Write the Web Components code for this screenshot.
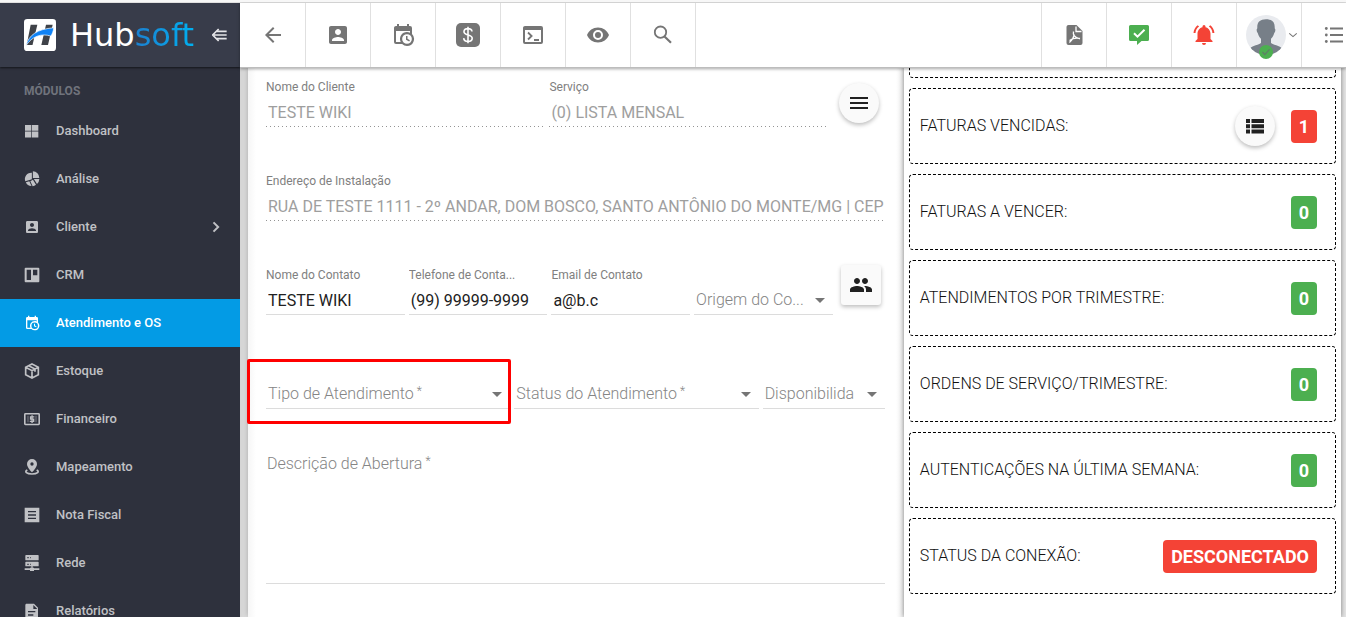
<!DOCTYPE html>
<html lang="pt-BR">
<head>
<meta charset="utf-8">
<title>Hubsoft</title>
<style>
html,body{margin:0;height:100%}
body{font-family:Roboto,"Liberation Sans",sans-serif;font-size:16px;line-height:20px;color:#212121;background:#e0e0e0;overflow:hidden}
</style>
</head>
<body>
<hs-shell>
  <hs-sidebar slot="side">
    <hs-nav-item icon="dashboard">Dashboard</hs-nav-item>
    <hs-nav-item icon="pie">Análise</hs-nav-item>
    <hs-nav-item icon="account" more>Cliente</hs-nav-item>
    <hs-nav-item icon="board">CRM</hs-nav-item>
    <hs-nav-item icon="calendar" active>Atendimento e OS</hs-nav-item>
    <hs-nav-item icon="cube">Estoque</hs-nav-item>
    <hs-nav-item icon="cash">Financeiro</hs-nav-item>
    <hs-nav-item icon="marker">Mapeamento</hs-nav-item>
    <hs-nav-item icon="note">Nota Fiscal</hs-nav-item>
    <hs-nav-item icon="server">Rede</hs-nav-item>
    <hs-nav-item icon="document">Relatórios</hs-nav-item>
  </hs-sidebar>
  <hs-toolbar slot="bar">
    <hs-tool icon="back" name="Voltar" first></hs-tool>
    <hs-tool icon="account" name="Clientes"></hs-tool>
    <hs-tool icon="calendar" name="Agenda"></hs-tool>
    <hs-tool icon="dollar" name="Financeiro"></hs-tool>
    <hs-tool icon="console" name="Console"></hs-tool>
    <hs-tool icon="eye" name="Visualizar"></hs-tool>
    <hs-tool icon="search" name="Buscar"></hs-tool>
    <hs-tool slot="end" icon="pdf" name="PDF"></hs-tool>
    <hs-tool slot="end" icon="chat" name="Mensagens" style="color:#4caf50"></hs-tool>
    <hs-tool slot="end" icon="bell" name="Notificações" style="color:#f44336"></hs-tool>
    <hs-user slot="end"></hs-user>
    <hs-tool slot="end" icon="list" name="Lista" last></hs-tool>
  </hs-toolbar>
  <hs-panel>
    <hs-row kind="client">
      <hs-field label="Nome do Cliente" value="TESTE WIKI" disabled></hs-field>
      <hs-field label="Serviço" value="(0) LISTA MENSAL" disabled></hs-field>
      <hs-fab icon="menu" name="Menu" style="margin:0 6px"></hs-fab>
    </hs-row>
    <hs-row>
      <hs-field label="Endereço de Instalação" value="RUA DE TESTE 1111 - 2º ANDAR, DOM BOSCO, SANTO ANTÔNIO DO MONTE/MG | CEP" disabled></hs-field>
    </hs-row>
    <hs-row kind="contact">
      <hs-field label="Nome do Contato" value="TESTE WIKI"></hs-field>
      <hs-field label="Telefone de Conta..." value="(99) 99999-9999"></hs-field>
      <hs-field label="Email de Contato" value="a@b.c"></hs-field>
      <hs-select label="Origem do Co..."></hs-select>
      <hs-fab icon="people" name="Contatos" square></hs-fab>
    </hs-row>
    <hs-row kind="ticket">
      <hs-select label="Tipo de Atendimento" required highlight></hs-select>
      <hs-select label="Status do Atendimento" required></hs-select>
      <hs-select label="Disponibilida"></hs-select>
    </hs-row>
    <hs-area label="Descrição de Abertura"></hs-area>
  </hs-panel>
  <hs-stats>
    <hs-stat></hs-stat>
    <hs-stat value="1" tone="red">FATURAS VENCIDAS:<hs-fab slot="action" icon="rows" name="Listar faturas"></hs-fab></hs-stat>
    <hs-stat value="0">FATURAS A VENCER:</hs-stat>
    <hs-stat value="0">ATENDIMENTOS POR TRIMESTRE:</hs-stat>
    <hs-stat value="0">ORDENS DE SERVIÇO/TRIMESTRE:</hs-stat>
    <hs-stat value="0">AUTENTICAÇÕES NA ÚLTIMA SEMANA:</hs-stat>
    <hs-stat value="DESCONECTADO" tone="red">STATUS DA CONEXÃO:</hs-stat>
  </hs-stats>
</hs-shell>
<script>
const ICONS = {
  back:'<path d="M20 11H7.83l5.59-5.59L12 4l-8 8 8 8 1.41-1.41L7.83 13H20z"/>',
  account:'<path d="M3 5v14c0 1.1.89 2 2 2h14c1.1 0 2-.9 2-2V5c0-1.1-.9-2-2-2H5c-1.11 0-2 .9-2 2zm12 4c0 1.66-1.34 3-3 3s-3-1.34-3-3 1.34-3 3-3 3 1.34 3 3zm-9 8c0-2 4-3.1 6-3.1s6 1.1 6 3.1v1H6z"/>',
  calendar:'<path d="M15 13h1.5v2.82l2.44 1.41-.75 1.3L15 16.69zM19 8H5v11h4.67A7 7 0 0 1 16 9c1.07 0 2.09.24 3 .67zM5 21a2 2 0 0 1-2-2V5c0-1.11.89-2 2-2h1V1h2v2h8V1h2v2h1a2 2 0 0 1 2 2v6.1A7 7 0 0 1 16 23a7 7 0 0 1-4.9-2zm11-9.85a4.85 4.85 0 1 0 0 9.7 4.85 4.85 0 0 0 0-9.7z"/>',
  dollar:'<rect width="24" height="24" rx="5"/><path d="M16 8.5C15.8 6.600 14.300 5.600 12 5.600S8 6.800 8 8.700c0 4.300 8.200 2.100 8.200 6.500 0 2-1.700 3.200-4.200 3.200s-4.200-1.200-4.300-3.300M12 3.800v16.400" fill="none" stroke="#fff" stroke-width="1.600"/>',
  console:'<path d="M4 3h16a2 2 0 0 1 2 2v14a2 2 0 0 1-2 2H4a2 2 0 0 1-2-2V5c0-1.100.9-2 2-2zm0 4v12h16V7z"/><path d="m7 9.500 3.600 3.500L7 16.500M13 17h5" fill="none" stroke="currentColor" stroke-width="1.800"/>',
  eye:'<path d="M12 4.500C7 4.500 2.730 7.610 1 12c1.730 4.390 6 7.500 11 7.500s9.270-3.110 11-7.500c-1.730-4.390-6-7.500-11-7.500zM12 17a5 5 0 1 1 0-10 5 5 0 0 1 0 10zm0-8a3 3 0 1 0 0 6 3 3 0 0 0 0-6z"/>',
  search:'<circle cx="9.500" cy="9.200" r="5.700" fill="none" stroke="currentColor" stroke-width="1.800"/><path d="m13.500 13.500 6.500 6.300" fill="none" stroke="currentColor" stroke-width="2.200"/>',
  pdf:'<path d="M6.500 2h8l6 6v12a2 2 0 0 1-2 2h-12a2 2 0 0 1-2-2V4c0-1.100.9-2 2-2z"/><path d="M14 3.500v5h5.500M11.500 8.500c-.6 2.500.2 6 6.500 7.300M12.200 11.500c-.5 3-2 5.700-4.800 8M7.500 17.500c3-2 6.500-2.800 10.500-2" fill="none" stroke="#fff" stroke-width="1.300"/>',
  chat:'<path d="M3.500 2h17A1.500 1.500 0 0 1 22 3.500v13a1.500 1.500 0 0 1-1.500 1.500h-6l-4.500 4v-4H3.500A1.500 1.500 0 0 1 2 16.500v-13A1.500 1.500 0 0 1 3.500 2z"/><path d="m7 10.200 3.500 3.500L17.500 6.700" fill="none" stroke="#fff" stroke-width="2"/>',
  bell:'<path d="M14 20h-4a2 2 0 0 0 4 0zM18.500 10.500c0-3.070-2.140-5.640-5-6.320V3.500a1.500 1.500 0 0 0-3 0v.68c-2.870.68-5 3.250-5 6.320V16l-2 2v1h17v-1l-2-2zM20.400 10h2c-.15-3.210-1.730-6.030-4.120-7.850l-1.430 1.430A8.500 8.500 0 0 1 20.400 10zM7.080 3.580 5.650 2.150C3.260 3.970 1.680 6.790 1.500 10h2a8.500 8.500 0 0 1 3.580-6.420z"/>',
  list:'<path d="M8 4.500h13v2H8zm0 6.500h13v2H8zm0 6.500h13v2H8z"/><circle cx="4.300" cy="5.500" r="1.400"/><circle cx="4.300" cy="12" r="1.400"/><circle cx="4.300" cy="18.500" r="1.400"/>',
  menu:'<path d="M3 6h18v2H3zm0 5h18v2H3zm0 5h18v2H3z"/>',
  people:'<path d="M16 11c1.660 0 2.990-1.340 2.990-3S17.660 5 16 5s-3 1.340-3 3 1.340 3 3 3zm-8 0c1.660 0 2.990-1.340 2.990-3S9.660 5 8 5 5 6.340 5 8s1.340 3 3 3zm0 2c-2.330 0-7 1.170-7 3.500V19h14v-2.500C15 14.170 10.330 13 8 13zm8 0c-.29 0-.62.02-.97.05 1.160.84 1.970 1.970 1.970 3.450V19h6v-2.500c0-2.330-4.670-3.500-7-3.500z"/>',
  rows:'<path d="M3 5h4v4H3zm5.500 0H21v4H8.500zM3 10.200h4v4H3zm5.500 0H21v4H8.500zM3 15.400h4v4H3zm5.500 0H21v4H8.500z"/>',
  dashboard:'<path d="M1.500 3h9.500v8.800H1.500zM12 3h9.500v8.800H12zM1.500 12.800h9.500v8.800H1.500zm10.500 0h9.500v8.800H12z"/>',
  pie:'<path d="M13.300 .5a10 10 0 0 1 9.700 10h-9.700zM11.800 2.500v9.800L2 15.500A9.500 9.500 0 0 1 11.800 2.500zM23 12a10.500 10.500 0 0 1-3.500 7.500L14.800 12zM13.400 13.200l4.600 7.500a11 11 0 0 1-5 2L9.500 15.500zM8 15.300l3.300 7.300A9 9 0 0 1 2.800 17z"/>',
  board:'<path fill-rule="evenodd" d="M2.500 1h19A1.500 1.500 0 0 1 23 2.500v19a1.500 1.500 0 0 1-1.500 1.500h-19A1.500 1.500 0 0 1 1 21.500v-19A1.500 1.500 0 0 1 2.500 1zM4 4v15.500h6.500V4zm9.500 0v8.500H20V4z"/>',
  cube:'<path d="M12 1.500 21.500 6.500v11L12 22.500 2.500 17.500v-11zM2.500 6.500 12 11.500l9.500-5M12 11.500v11M7 4l9.500 5v4" fill="none" stroke="currentColor" stroke-width="2.500"/>',
  cash:'<rect x="1.200" y="4.200" width="21.600" height="16" rx="1" fill="none" stroke="currentColor" stroke-width="2.400"/><path d="M15.500 8.800H9.800v3.300h4.700v3.500H8.700M12.100 6.500v11.500" fill="none" stroke="currentColor" stroke-width="2"/><path d="M5 7h2v10H5zm12 0h2v10h-2z" opacity=".4"/>',
  marker:'<path fill-rule="evenodd" d="M12 0a7.500 7.500 0 0 1 7.500 7.500C19.500 13 12 20 12 20S4.500 13 4.500 7.500A7.500 7.500 0 0 1 12 0zm0 5a2.500 2.500 0 1 0 0 5 2.500 2.500 0 0 0 0-5z"/><path d="M5 16.500c-5 2.500-1 6 7 6s12-3.500 7-6" fill="none" stroke="currentColor" stroke-width="2.600"/>',
  note:'<path fill-rule="evenodd" d="M1 1h22v22H1zm5 5v2h12V6zm0 5v2h12v-2zm0 5v2h12v-2z"/>',
  server:'<path fill-rule="evenodd" d="M3 0h18a1 1 0 0 1 1 1v6a1 1 0 0 1-1 1H3a1 1 0 0 1-1-1V1a1 1 0 0 1 1-1zm2 3v2h2V3zm4 0v2h1V3zM3 10h18a1 1 0 0 1 1 1v5a1 1 0 0 1-1 1h-8v2h2v1h8v2.500h-8V24H9v-1.500H1V20h8v-1h2v-2H3a1 1 0 0 1-1-1v-5a1 1 0 0 1 1-1zm2 3v2h2v-2zm4 0v2h1v-2z"/>',
  document:'<path fill-rule="evenodd" d="M4 1h11l6 6v14a2 2 0 0 1-2 2H4a2 2 0 0 1-2-2V3c0-1.100.9-2 2-2zm10 2v6h6zM6 12v2h11v-2zm0 5v2h8v-2z"/>',
  chevron:'<path d="m6 4 8 8-8 8" fill="none" stroke="currentColor" stroke-width="3.400"/>',
  down:'<path d="m3 8 9 8 9-8" fill="none" stroke="currentColor" stroke-width="2.500"/>',
  collapse:'<path d="M10 3 1 12l9 9M3 12h19M7 6.500h15M7 17.500h15" fill="none" stroke="currentColor" stroke-width="2.600"/>',
  logo:'<rect width="24" height="24" rx="2.500" fill="#fff"/><path d="M5 4.300h5L6.400 19.500H2zM16.500 4.300h5L18 19.500h-5z" fill="#3f4248"/><path d="M1.500 20C3.500 12 10 7.500 22.300 6.600c-.3 2.500-1 4.600-2.200 6.200C13 10.500 6 13 1.500 20z" fill="#0f82f5" stroke="#fff" stroke-width=".5"/>',
  avatar:'<clipPath id="r"><circle cx="12" cy="12" r="12"/></clipPath><g clip-path="url(#r)"><path fill="#e9ebef" d="M0 0h24v24H0z"/><path d="M12 2.500c3.800 0 5.500 1.900 5.200 5.500.7.400.5 1.900-.3 2.900-.4 1.500-1.100 2.600-1.900 3.300v2.600c2.500 1.600 6.500 1.700 7.500 4.700L22 24H2l-.5-2.500c1-3 5-3.100 7.500-4.700v-2.600c-.8-.7-1.500-1.800-1.900-3.300-.8-1-1-2.500-.3-2.900C6.500 4.400 8.200 2.500 12 2.500z" fill="#777f88"/></g>',
  tick:'<circle cx="12" cy="12" r="12" fill="#4caf50"/><path d="m6 12 4 4.500 8-9" fill="none" stroke="#607d68" stroke-width="2.200"/>'
};

function define(name, css, render, display = 'block') {
  customElements.define(name, class extends HTMLElement {
    connectedCallback() {
      if (this.shadowRoot) return;
      const root = this.attachShadow({ mode: 'open' });
      root.innerHTML = `<style>:host{display:${display};box-sizing:border-box}*{box-sizing:border-box}${css}</style>${render(this)}`;
    }
  });
}
const at = (el, n) => el.getAttribute(n) || '';

define('hs-icon', `
  :host{width:24px;height:24px;flex:none}
  :host([size="40"]){width:40px;height:40px}
  :host([size="32"]){width:32px;height:32px}
  :host([size="16"]){width:16px;height:16px}
  :host([size="14"]){width:14px;height:14px}
  :host([size="10"]){width:10px;height:10px}
  svg{display:block;width:100%;height:100%}`,
  el => `<svg viewBox="0 0 24 24" fill="currentColor" aria-hidden="true">${ICONS[at(el, 'name')]}</svg>`);

define('hs-shell', `
  :host{height:100vh;border-top:2px solid #f7f7f7;overflow:hidden}
  .app{display:grid;grid-template:64px 1fr/240px 1fr;height:100%;border-top:1px solid #e0e0e0}
  .side{grid-row:1/3;min-height:0;display:grid}
  .bar{z-index:3;display:grid}
  main{min-height:0;display:grid;grid-template-columns:3fr 2fr;padding:0 5px 0 8px;overflow:hidden;background:linear-gradient(90deg,#d4d4d4,#e4e4e4 8px)}`,
  () => `<div class="app"><div class="side"><slot name="side"></slot></div><div class="bar"><slot name="bar"></slot></div><main><slot></slot></main></div>`);

define('hs-sidebar', `
  :host{display:flex;flex-direction:column;min-height:0;overflow:hidden;background:#2e313d}
  header{flex:none;display:flex;align-items:center;height:64px;padding:0 12px 0 24px;background:#383c4a;color:#fff;box-shadow:0 1px 2px rgba(0,0,0,.6);position:relative}
  .word{flex:1;margin-left:14px;font:32px/32px "DejaVu Sans",sans-serif;color:#fff;text-decoration:none}
  .word span{background:linear-gradient(90deg,#1c80d0,#00b0f0);background-clip:text;-webkit-background-clip:text;color:transparent}
  button{border:0;background:none;padding:0;color:#e4e5e8;display:flex}
  h2{flex:none;margin:8px 0 0;padding-left:24px;font-size:12px;line-height:32px;font-weight:700;color:#70737c}
  nav{flex:none}`,
  () => `<header><hs-icon name="logo" size="32"></hs-icon><a class="word" href="#">Hub<span>soft</span></a><button aria-label="Recolher menu"><hs-icon name="collapse" size="16"></hs-icon></button></header><h2>MÓDULOS</h2><nav><slot></slot></nav>`);

define('hs-nav-item', `
  a{display:flex;align-items:center;gap:16px;height:48px;padding:0 16px 0 24px;font-size:13px;font-weight:500;color:#c0c1c5;text-decoration:none}
  :host([active]) a{background:#039be5;color:#fff}
  span{flex:1}`,
  el => `<a href="#"><hs-icon name="${at(el, 'icon')}" size="16"></hs-icon><span><slot></slot></span>${el.hasAttribute('more') ? '<hs-icon name="chevron" size="14"></hs-icon>' : ''}</a>`);

define('hs-toolbar', `
  :host{display:flex;background:#fff;color:#757575;border-bottom:1px solid #bdbdbd;box-shadow:0 1px 3px rgba(0,0,0,.35);height:65px;margin-bottom:-1px}
  div{display:flex}
  .end{margin-left:auto}`,
  () => `<div><slot></slot></div><div class="end"><slot name="end"></slot></div>`);

define('hs-tool', `
  :host{display:grid}
  button{width:65px;border:0;border-right:1px solid #e0e0e0;padding:0;background:none;color:inherit;display:flex;align-items:center;justify-content:center}
  :host([slot=end]) button{border-right:0;border-left:1px solid #e0e0e0}
  :host([first]) button{width:66px}
  :host([last]) button{width:45px;justify-content:flex-end}`,
  el => `<button aria-label="${at(el, 'name')}"><hs-icon name="${at(el, 'icon')}"></hs-icon></button>`);

define('hs-user', `
  :host{display:grid}
  button{width:65px;border:0;border-left:1px solid #e0e0e0;padding:0 0 0 9px;background:none;color:#757575;display:flex;align-items:center;gap:2px}
  .pic{position:relative}
  .state{position:absolute;left:13px;bottom:-4px}`,
  () => `<button aria-label="Usuário"><span class="pic"><hs-icon name="avatar" size="40"></hs-icon><hs-icon class="state" name="tick" size="14"></hs-icon></span><hs-icon name="down" size="10"></hs-icon></button>`);

define('hs-panel', `
  :host{min-width:0;padding:12px 19px 0 18px;background:linear-gradient(90deg,#f6f6f6,#fff 8px,#fff calc(100% - 8px),#ececec);box-shadow:0 0 6px rgba(0,0,0,.3)}
  form{display:grid;gap:46px}`,
  () => `<form><slot></slot></form>`);

define('hs-row', `
  :host{display:grid;gap:4px;align-items:center;min-width:0}
  :host([kind=client]){grid-template-columns:1fr 1fr auto;gap:5px}
  :host([kind=contact]){grid-template-columns:repeat(4,1fr) auto}
  :host([kind=ticket]){grid-template-columns:2fr 2fr 1fr}`,
  () => `<slot></slot>`);

define('hs-field', `
  :host{min-width:0}
  label{display:block;height:18px;font-size:12px;line-height:16px;color:#808080;white-space:nowrap;overflow:hidden}
  input{display:block;width:100%;height:30px;padding:2px 2px 1px;border:0;border-bottom:1px solid #dcdcdc;border-radius:0;background:none;font:inherit;font-weight:400;color:#212121;outline:0}
  input:disabled{padding-right:0;color:#9e9e9e;border-bottom:0;background:repeating-linear-gradient(90deg,#949494 0 1px,transparent 1px 4px) bottom/100% 1px no-repeat}`,
  el => `<label for="i">${at(el, 'label')}</label><input id="i" value="${at(el, 'value')}"${el.hasAttribute('disabled') ? ' disabled' : ''}>`);

define('hs-select', `
  :host{position:relative;display:grid;grid-template-columns:1fr;padding-top:18px;min-width:0}
  label,select,i{grid-area:1/1}
  select{appearance:none;width:100%;height:30px;border:0;border-bottom:1px solid #dcdcdc;border-radius:0;background:none;outline:0;font:inherit}
  label{z-index:1;pointer-events:none;align-self:center;padding-left:2px;margin-right:24px;font-weight:300;color:#858585;white-space:nowrap;overflow:hidden}
  sup{font-size:12px;line-height:0;vertical-align:4px;margin-left:3px}
  i{justify-self:end;align-self:center;margin-right:8px;border:5px solid transparent;border-top-color:#757575;border-bottom:0;pointer-events:none}
  .mark{position:absolute;inset:-2px -1px -15px -19px;border:3px solid #f00;border-radius:2px;z-index:2;pointer-events:none}`,
  el => `<label for="s">${at(el, 'label')}${el.hasAttribute('required') ? '<sup>*</sup>' : ''}</label><select id="s"><option></option></select><i></i>${el.hasAttribute('highlight') ? '<div class="mark"></div>' : ''}`);

define('hs-area', `
  :host{display:grid}
  label,textarea{grid-area:1/1}
  label{z-index:1;pointer-events:none;justify-self:start;align-self:start;padding-left:1px;line-height:18px;font-weight:300;color:#858585}
  sup{font-size:12px;line-height:0;vertical-align:4px;margin-left:3px}
  textarea{display:block;width:100%;height:129px;border:0;border-bottom:1px solid #dcdcdc;padding:0 1px;resize:none;background:none;font:inherit;outline:0}`,
  el => `<label for="t">${at(el, 'label')}<sup>*</sup></label><textarea id="t"></textarea>`);

define('hs-fab', `
  button{display:flex;align-items:center;justify-content:center;width:40px;height:40px;padding:0;border:0;border-radius:50%;background:#fafafa;color:#212121;box-shadow:0 2px 4px rgba(0,0,0,.26)}
  :host([square]){margin:-2px 4px;align-self:start}
  :host([square]) button{border-radius:3px}`,
  el => `<button type="button" aria-label="${at(el, 'name')}"><hs-icon name="${at(el, 'icon')}"></hs-icon></button>`);

/* The list is scrolled so that only the tail of its first card shows. */
define('hs-stats', `
  :host{display:flex;flex-direction:column;gap:10px;min-width:0;padding:0 5px;background:#fff;box-shadow:0 0 5px rgba(0,0,0,.45)}
  ::slotted(:first-child){margin-top:-65px}`,
  () => `<slot></slot>`);

define('hs-stat', `
  :host{display:flex;flex:none;align-items:center;gap:16px;height:76px;padding:0 18px 0 10px;border:1px dashed #000;border-radius:4px;font-weight:300;color:#111}
  .name{flex:1}
  output{min-width:26px;padding:0 8px;border-radius:4px;background:#4caf50;color:#fff;font-size:18px;line-height:33px;font-weight:700;text-align:center}
  :host([tone=red]) output{background:#f44336}`,
  el => `<span class="name"><slot></slot></span><slot name="action"></slot>${at(el, 'value') ? `<output>${at(el, 'value')}</output>` : ''}`);
</script>
</body>
</html>
